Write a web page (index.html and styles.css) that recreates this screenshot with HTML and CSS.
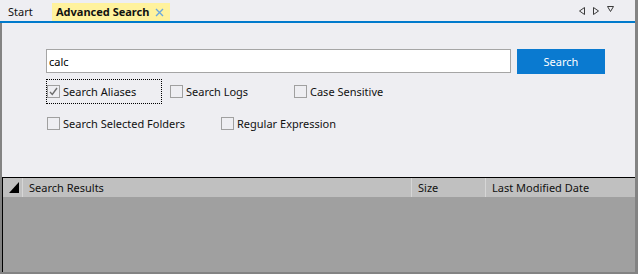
FILE: index.html
```html
<!DOCTYPE html>
<html lang="en">
<head>
  <meta charset="UTF-8">
  <meta name="viewport" content="width=device-width, initial-scale=1.0">
  <title>Advanced Search</title>
  <link rel="stylesheet" href="styles.css">
</head>
<body>
  <div class="window">
    <div class="tabstrip">
      <div class="tab">Start</div>
      <div class="tab active">
        Advanced Search
        <svg class="close" width="9" height="9" viewBox="0 0 9 9">
          <path d="M1 1L8 8M8 1L1 8" stroke="#6ba7df" stroke-width="1.4" fill="none"/>
        </svg>
      </div>
      <div class="nav">
        <svg width="6" height="8" viewBox="0 0 6 8"><polygon points="5.5,0.5 5.5,7.5 0.5,4" fill="none" stroke="#3a3a3a"/></svg>
        <svg width="6" height="8" viewBox="0 0 6 8"><polygon points="0.5,0.5 0.5,7.5 5.5,4" fill="none" stroke="#3a3a3a"/></svg>
        <svg class="down" width="7" height="6" viewBox="0 0 7 6"><polygon points="0.5,0.5 6.5,0.5 3.5,5.5" fill="none" stroke="#3a3a3a"/></svg>
      </div>
    </div>

    <div class="panel">
      <div class="form">
        <div class="query-row">
          <input class="query" type="text" value="calc">
          <button class="search-btn">Search</button>
        </div>
        <div class="options first-row">
          <label class="check focused">
            <span class="box checked">
              <svg width="11" height="11" viewBox="0 0 11 11"><path d="M2 6L4.3 8.5L9 2" stroke="#6d6d6d" stroke-width="1.4" fill="none"/></svg>
            </span>
            Search Aliases
          </label>
          <label class="check"><span class="box"></span>Search Logs</label>
          <label class="check"><span class="box"></span>Case Sensitive</label>
        </div>
        <div class="options second-row">
          <label class="check"><span class="box"></span>Search Selected Folders</label>
          <label class="check"><span class="box"></span>Regular Expression</label>
        </div>
      </div>

      <div class="results">
        <div class="header">
          <div class="col corner">
            <svg width="10" height="11" viewBox="0 0 10 11"><polygon points="10,0 10,11 0,11" fill="#000"/></svg>
          </div>
          <div class="col">Search Results</div>
          <div class="col">Size</div>
          <div class="col">Last Modified Date</div>
        </div>
        <div class="rows"></div>
      </div>
    </div>
  </div>
</body>
</html>
```

FILE: styles.css
```css
* {
  box-sizing: border-box;
}
body {
  margin: 0;
  background: #eeeef2;
  font-family: "Noto Sans", "Open Sans", sans-serif;
  font-size: 11px;
  color: #111;
}
.window {
  width: 638px;
  height: 274px;
  display: flex;
  flex-direction: column;
  border-right: 3px solid #838383;
  border-bottom: 2px solid #838383;
}
.tabstrip {
  height: 23px;
  flex: 0 0 23px;
  display: flex;
  align-items: flex-end;
  border-bottom: 2px solid #007acc;
}
.tab {
  height: 18px;
  line-height: 18px;
  padding: 0 8px;
  width: 52px;
}
.tab.active {
  width: auto;
  display: flex;
  align-items: center;
  gap: 6px;
  padding: 0 6px 0 4px;
  background: #fff29d;
  font-weight: bold;
}
.close {
  margin-top: 1px;
}
.nav {
  margin-left: auto;
  align-self: flex-start;
  display: flex;
  gap: 8px;
  padding: 7px 21px 0 0;
}
.nav .down {
  margin-top: -1px;
}
.panel {
  flex: 1;
  display: flex;
  flex-direction: column;
  border-left: 2px solid #838383;
}
.form {
  height: 154px;
  flex: 0 0 154px;
  padding: 26px 0 0 44px;
}
.query-row {
  display: flex;
  gap: 6px;
}
.query {
  width: 465px;
  height: 24px;
  border: 1px solid #a5a5a5;
  background: #fff;
  padding: 0 2px;
  font: inherit;
  color: #000;
  outline: none;
}
.search-btn {
  width: 88px;
  height: 25px;
  border: none;
  background: #0a7ad0;
  color: #fff;
  font: inherit;
}
.options {
  display: grid;
  height: 25px;
}
.first-row {
  margin-top: 5px;
  grid-template-columns: 123px 124px auto;
}
.second-row {
  margin-top: 7px;
  grid-template-columns: 174px auto;
}
.check {
  display: flex;
  align-items: center;
  gap: 3px;
  height: 25px;
  border: 1px solid transparent;
  white-space: nowrap;
}
.check.focused {
  width: 116px;
  border: 1px dotted #000;
}
.box {
  width: 13px;
  height: 13px;
  flex: 0 0 13px;
  border: 1px solid #a0a0a0;
  display: flex;
  align-items: center;
  justify-content: center;
}
.results {
  flex: 1;
  display: flex;
  flex-direction: column;
  border-top: 1px solid #000;
  border-left: 1px solid #000;
}
.header {
  height: 19px;
  flex: 0 0 19px;
  display: grid;
  grid-template-columns: 20px 389px 74px auto;
  background: #c0c0c0;
}
.col {
  line-height: 19px;
  padding-left: 6px;
  border-right: 1px solid #d6d6d6;
}
.col:last-child {
  border-right: none;
}
.corner {
  padding: 4px 0 0 6px;
  line-height: 0;
}
.rows {
  flex: 1;
  background: #a0a0a0;
}
```
